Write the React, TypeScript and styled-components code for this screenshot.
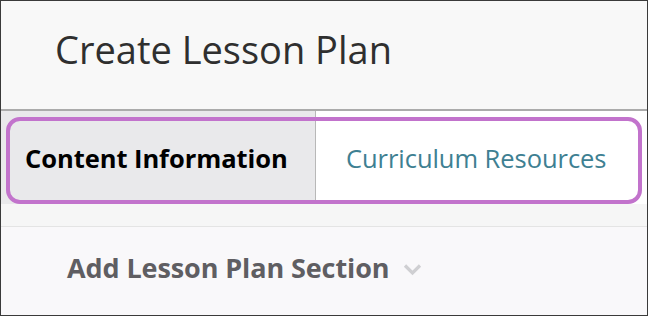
import React from "react";
import styled, { createGlobalStyle } from "styled-components";

const Global = createGlobalStyle`
  html, body { margin: 0; padding: 0; background: #ffffff; }
  * { box-sizing: border-box; }
`;

const Frame = styled.div`
  width: 648px;
  height: 316px;
  border: 1px solid #3a3a3a;
  background: #f9f8fa;
  display: flex;
  flex-direction: column;
  font-family: "Open Sans", "Noto Sans", sans-serif;
  overflow: hidden;
`;

const Header = styled.header`
  height: 110px;
  flex: none;
  background: #f8f8f8;
  border-bottom: 2px solid #ababab;
  display: flex;
  align-items: center;
  padding-left: 54px;
  padding-bottom: 12px;
`;

const Title = styled.h1`
  margin: 0;
  font-size: 38px;
  font-weight: 400;
  color: #2f2f2f;
  letter-spacing: 0px;
`;

const TabsWrap = styled.div`
  position: relative;
  flex: none;
  background: #f6f6f6;
  height: 116px;
  border-bottom: 1px solid #e4e4e4;
  display: flex;
  flex-direction: column;
`;

const TabRow = styled.div`
  display: flex;
  height: 93px;
`;

const Tab = styled.div<{ $active?: boolean; $grow?: boolean }>`
  display: flex;
  align-items: center;
  background: ${(p) => (p.$active ? "#e9e9eb" : "#ffffff")};
  color: ${(p) => (p.$active ? "#000000" : "#3e8092")};
  font-weight: ${(p) => (p.$active ? 700 : 400)};
  font-size: 25.5px;
  letter-spacing: -0.05px;
  padding-left: ${(p) => (p.$active ? "24px" : "30px")};
  width: ${(p) => (p.$active ? "315px" : "auto")};
  flex: ${(p) => (p.$grow ? 1 : "none")};
  border-right: ${(p) => (p.$active ? "1px solid #b8b8b8" : "none")};
  padding-bottom: 0px;
`;

const Highlight = styled.div`
  position: absolute;
  left: 5px;
  top: 6px;
  width: 636px;
  height: 87px;
  border: 4px solid #c273cc;
  border-radius: 14px;
  pointer-events: none;
`;

const Section = styled.div`
  flex: 1;
  display: flex;
  align-items: center;
  padding-left: 66px;
  padding-bottom: 8px;
  gap: 14px;
`;

const SectionLabel = styled.span`
  font-size: 27px;
  font-weight: 700;
  color: #5f5e62;
  letter-spacing: -0.1px;
`;

const Chevron = styled.svg`
  width: 19px;
  height: 13px;
  margin-top: 5px;
`;

export default function App() {
  return (
    <>
      <Global />
      <Frame>
        <Header>
          <Title>Create Lesson Plan</Title>
        </Header>
        <TabsWrap>
          <TabRow>
            <Tab $active>Content Information</Tab>
            <Tab $grow>Curriculum Resources</Tab>
          </TabRow>
          <Highlight />
        </TabsWrap>
        <Section>
          <SectionLabel>Add Lesson Plan Section</SectionLabel>
          <Chevron viewBox="0 0 19 13">
            <path d="M2 2.5 L9.5 10 L17 2.5" fill="none" stroke="#cfcfd2" strokeWidth="3.2" />
          </Chevron>
        </Section>
      </Frame>
    </>
  );
}
